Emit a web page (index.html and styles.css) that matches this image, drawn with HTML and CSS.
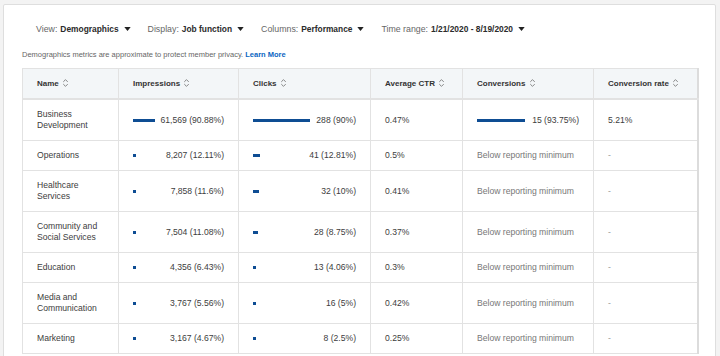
FILE: index.html
```html
<!DOCTYPE html>
<html lang="en">

<head>
    <meta charset="UTF-8">
    <meta name="viewport" content="width=device-width, initial-scale=1.0">
    <title>Demographics</title>
    <link rel="stylesheet" href="styles.css">
</head>

<body>
    <div class="card">
        <!-- filters -->
        <div class="filters">
            <div class="filter"><span class="label">View:</span><span class="value">Demographics</span>
                <svg class="caret" viewBox="0 0 8 5"><path d="M0 0h8L4 5z" /></svg></div>
            <div class="filter"><span class="label">Display:</span><span class="value">Job function</span>
                <svg class="caret" viewBox="0 0 8 5"><path d="M0 0h8L4 5z" /></svg></div>
            <div class="filter"><span class="label">Columns:</span><span class="value">Performance</span>
                <svg class="caret" viewBox="0 0 8 5"><path d="M0 0h8L4 5z" /></svg></div>
            <div class="filter"><span class="label">Time range:</span><span class="value">1/21/2020 - 8/19/2020</span>
                <svg class="caret" viewBox="0 0 8 5"><path d="M0 0h8L4 5z" /></svg></div>
        </div>

        <p class="note">Demographics metrics are approximate to protect member privacy. <a href="#">Learn More</a></p>

        <table class="data">
            <thead>
                <tr>
                    <th class="c-name">Name <svg class="sort" viewBox="0 0 6 9"><path d="M1 3.5L3 1.5L5 3.5M1 5.5L3 7.5L5 5.5" /></svg></th>
                    <th class="c-imp">Impressions <svg class="sort" viewBox="0 0 6 9"><path d="M1 3.5L3 1.5L5 3.5M1 5.5L3 7.5L5 5.5" /></svg></th>
                    <th class="c-clk">Clicks <svg class="sort" viewBox="0 0 6 9"><path d="M1 3.5L3 1.5L5 3.5M1 5.5L3 7.5L5 5.5" /></svg></th>
                    <th class="c-ctr">Average CTR <svg class="sort" viewBox="0 0 6 9"><path d="M1 3.5L3 1.5L5 3.5M1 5.5L3 7.5L5 5.5" /></svg></th>
                    <th class="c-conv">Conversions <svg class="sort" viewBox="0 0 6 9"><path d="M1 3.5L3 1.5L5 3.5M1 5.5L3 7.5L5 5.5" /></svg></th>
                    <th class="c-rate">Conversion rate <svg class="sort" viewBox="0 0 6 9"><path d="M1 3.5L3 1.5L5 3.5M1 5.5L3 7.5L5 5.5" /></svg></th>
                </tr>
            </thead>
            <tbody>
                <tr>
                    <td>Business<br>Development</td>
                    <td><div class="metric imp"><span class="track"><span class="bar" style="width: 90.88%"></span></span><span class="num">61,569 (90.88%)</span></div></td>
                    <td><div class="metric clk"><span class="track"><span class="bar" style="width: 90%"></span></span><span class="num">288 (90%)</span></div></td>
                    <td>0.47%</td>
                    <td><div class="metric conv"><span class="track"><span class="bar" style="width: 93.75%"></span></span><span class="num">15 (93.75%)</span></div></td>
                    <td>5.21%</td>
                </tr>
                <tr>
                    <td>Operations</td>
                    <td><div class="metric imp"><span class="track"><span class="bar" style="width: 12.11%"></span></span><span class="num">8,207 (12.11%)</span></div></td>
                    <td><div class="metric clk"><span class="track"><span class="bar" style="width: 12.81%"></span></span><span class="num">41 (12.81%)</span></div></td>
                    <td>0.5%</td>
                    <td class="muted">Below reporting minimum</td>
                    <td class="dash">-</td>
                </tr>
                <tr>
                    <td>Healthcare<br>Services</td>
                    <td><div class="metric imp"><span class="track"><span class="bar" style="width: 11.6%"></span></span><span class="num">7,858 (11.6%)</span></div></td>
                    <td><div class="metric clk"><span class="track"><span class="bar" style="width: 10%"></span></span><span class="num">32 (10%)</span></div></td>
                    <td>0.41%</td>
                    <td class="muted">Below reporting minimum</td>
                    <td class="dash">-</td>
                </tr>
                <tr>
                    <td>Community and<br>Social Services</td>
                    <td><div class="metric imp"><span class="track"><span class="bar" style="width: 11.08%"></span></span><span class="num">7,504 (11.08%)</span></div></td>
                    <td><div class="metric clk"><span class="track"><span class="bar" style="width: 8.75%"></span></span><span class="num">28 (8.75%)</span></div></td>
                    <td>0.37%</td>
                    <td class="muted">Below reporting minimum</td>
                    <td class="dash">-</td>
                </tr>
                <tr>
                    <td>Education</td>
                    <td><div class="metric imp"><span class="track"><span class="bar" style="width: 6.43%"></span></span><span class="num">4,356 (6.43%)</span></div></td>
                    <td><div class="metric clk"><span class="track"><span class="bar" style="width: 4.06%"></span></span><span class="num">13 (4.06%)</span></div></td>
                    <td>0.3%</td>
                    <td class="muted">Below reporting minimum</td>
                    <td class="dash">-</td>
                </tr>
                <tr>
                    <td>Media and<br>Communication</td>
                    <td><div class="metric imp"><span class="track"><span class="bar" style="width: 5.56%"></span></span><span class="num">3,767 (5.56%)</span></div></td>
                    <td><div class="metric clk"><span class="track"><span class="bar" style="width: 5%"></span></span><span class="num">16 (5%)</span></div></td>
                    <td>0.42%</td>
                    <td class="muted">Below reporting minimum</td>
                    <td class="dash">-</td>
                </tr>
                <tr>
                    <td>Marketing</td>
                    <td><div class="metric imp"><span class="track"><span class="bar" style="width: 4.67%"></span></span><span class="num">3,167 (4.67%)</span></div></td>
                    <td><div class="metric clk"><span class="track"><span class="bar" style="width: 2.5%"></span></span><span class="num">8 (2.5%)</span></div></td>
                    <td>0.25%</td>
                    <td class="muted">Below reporting minimum</td>
                    <td class="dash">-</td>
                </tr>
            </tbody>
        </table>
    </div>
</body>

</html>
```

FILE: styles.css
```css
html,
body {
    margin: 0;
    height: 100%;
    overflow: hidden;
}

body {
    background-color: #f3f3f3;
    font-family: "Liberation Sans", Arial, sans-serif;
    color: #3d3d3d;
    font-size: 8.6px;
}

.card {
    margin: 4px 4px 0 3px;
    padding: 16px 18px 40px 18px;
    background-color: white;
    border: 1px solid #dedede;
    border-radius: 2px;
}

.filters {
    display: flex;
    align-items: center;
    gap: 17px;
    padding-left: 14px;
    height: 16px;
    font-size: 8.8px;
}

.filter {
    display: flex;
    align-items: center;
}

.label {
    color: #666;
    margin-right: 3px;
}

.value {
    color: #2b2b2b;
    font-weight: bold;
    font-size: 8.4px;
}

.caret {
    width: 7px;
    height: 4px;
    margin-left: 5px;
    fill: #222;
}

.note {
    margin: 13px 0 9px 0;
    font-size: 7.5px;
    color: #666;
}

.note a {
    color: #0a66c2;
    font-weight: bold;
    text-decoration: none;
}

.data {
    border-collapse: collapse;
    width: 675px;
    table-layout: fixed;
    border: 1px solid #dcdcdc;
    border-right-width: 2px;
}

.data th,
.data td {
    box-sizing: border-box;
    border: 1px solid #e2e2e2;
    padding: 9px 14px;
    line-height: 11px;
    text-align: left;
    vertical-align: middle;
}

.data th {
    background-color: #f3f6f8;
    font-weight: bold;
    font-size: 8px;
    color: #333;
    border-bottom: 2px solid #e2e2e2;
}

.sort {
    width: 7px;
    height: 10px;
    margin-left: 1px;
    vertical-align: -2px;
    fill: none;
    stroke: #777;
    stroke-width: 0.8;
}

.c-name { width: 96px; }
.c-imp { width: 120px; }
.c-clk { width: 132px; }
.c-ctr { width: 92px; }
.c-conv { width: 131px; }
.c-rate { width: 104px; }

.metric {
    display: flex;
    align-items: center;
}

.track {
    display: block;
    height: 3px;
}

.imp .track { width: 24px; }
.clk .track { width: 63px; }
.conv .track { width: 56px; }

.bar {
    display: block;
    height: 3px;
    min-width: 3px;
    background-color: #0e4d93;
}

.num {
    margin-left: auto;
    white-space: nowrap;
}

.conv .num {
    margin-left: 4px;
}

.muted {
    color: #777;
}

.dash {
    color: #999;
}
```
